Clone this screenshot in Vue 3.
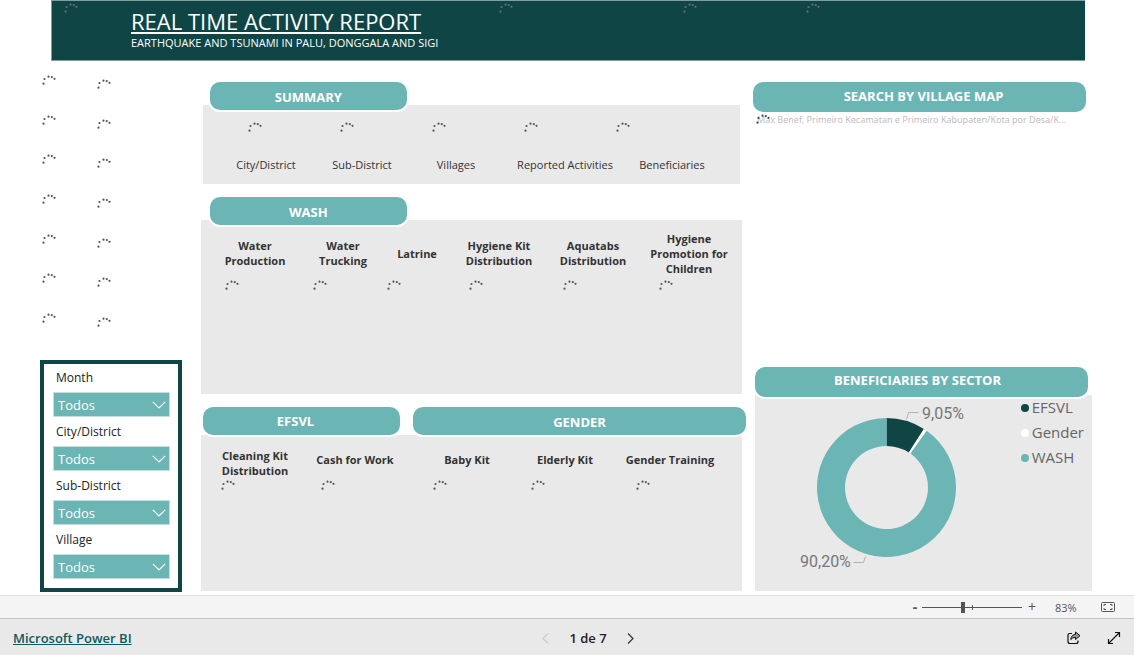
<script setup>
import { h, ref } from 'vue'

const dots = [[1.5, 8.7], [2.5, 4], [6.5, 1.7], [9.8, 2.1], [12.5, 3.8]]
const Spinner = () =>
  h('svg', { width: 14, height: 11, viewBox: '0 0 14 11', 'aria-hidden': 'true' },
    dots.map(([cx, cy]) => h('circle', { cx, cy, r: 1.1, fill: 'currentColor' })))

const summary = ['City/District', 'Sub-District', 'Villages', 'Reported Activities', 'Beneficiaries']
const wash = [
  ['Water', 'Production'],
  ['Water', 'Trucking'],
  ['Latrine'],
  ['Hygiene Kit', 'Distribution'],
  ['Aquatabs', 'Distribution'],
  ['Hygiene', 'Promotion for', 'Children'],
]
const sectors = [
  ['Cleaning Kit', 'Distribution'],
  ['Cash for Work'],
  ['Baby Kit'],
  ['Elderly Kit'],
  ['Gender Training'],
]
const filters = [
  { id: 'month', label: 'Month' },
  { id: 'city', label: 'City/District' },
  { id: 'sub', label: 'Sub-District' },
  { id: 'village', label: 'Village' },
]
const zoom = ref(41)

const slices = [
  { name: 'EFSVL', value: 9.05, color: '#0f4645' },
  { name: 'Gender', value: 0.75, color: '#ffffff' },
  { name: 'WASH', value: 90.2, color: '#6cb5b5' },
]
const cx = 131.5
const cy = 92.5
const point = (r, share) => {
  const a = share * 2 * Math.PI
  return `${(cx + r * Math.sin(a)).toFixed(2)} ${(cy - r * Math.cos(a)).toFixed(2)}`
}
let sum = 0
const arcs = slices.map((s) => {
  const from = sum / 100
  sum += s.value
  const to = sum / 100
  const big = to - from > 0.5 ? 1 : 0
  return {
    ...s,
    d: `M${point(69.5, from)}A69.5 69.5 0 ${big} 1 ${point(69.5, to)}L${point(41.5, to)}A41.5 41.5 0 ${big} 0 ${point(41.5, from)}Z`,
  }
})
</script>

<template>
  <div class="page">
    <header class="banner">
      <div class="banner-loaders"><Spinner v-for="n in 4" :key="n" /></div>
      <h1>REAL TIME ACTIVITY REPORT</h1>
      <p>EARTHQUAKE AND TSUNAMI IN PALU, DONGGALA AND SIGI</p>
    </header>

    <main class="report">
      <aside class="side">
        <div class="side-loaders">
          <div class="loader-col"><Spinner v-for="n in 7" :key="n" /></div>
          <div class="loader-col low"><Spinner v-for="n in 7" :key="n" /></div>
        </div>
        <form class="filters">
          <div v-for="f in filters" :key="f.id" class="filter">
            <label :for="f.id">{{ f.label }}</label>
            <div class="select-wrap">
              <select :id="f.id"><option>Todos</option></select>
              <svg width="14" height="8" viewBox="0 0 14 8" aria-hidden="true"><path d="M.8 .8L7 7L13.200 .8" fill="none" stroke="#fff" stroke-width="1.200" /></svg>
            </div>
          </div>
        </form>
      </aside>

      <div class="middle">
        <section>
          <h2 class="pill short">SUMMARY</h2>
          <div class="panel summary">
            <div class="summary-loaders"><Spinner v-for="n in 5" :key="n" /></div>
            <div class="summary-labels"><span v-for="s in summary" :key="s">{{ s }}</span></div>
          </div>
        </section>

        <section>
          <h2 class="pill short">WASH</h2>
          <div class="panel wash">
            <div v-for="(w, i) in wash" :key="i" class="metric">
              <h3><span v-for="l in w" :key="l">{{ l }}</span></h3>
              <Spinner />
            </div>
          </div>
        </section>

        <section>
          <div class="pill-row">
            <h2 class="pill efsvl">EFSVL</h2>
            <h2 class="pill gender">GENDER</h2>
          </div>
          <div class="panel sectors">
            <div v-for="(w, i) in sectors" :key="i" class="metric">
              <h3 :class="{ single: w.length === 1 }"><span v-for="l in w" :key="l">{{ l }}</span></h3>
              <Spinner />
            </div>
          </div>
        </section>
      </div>

      <div class="right">
        <section class="map">
          <h2 class="pill tall">SEARCH BY VILLAGE MAP</h2>
          <p class="map-title"><span class="map-loader"><Spinner /></span>Max Benef, Primeiro Kecamatan e Primeiro Kabupaten/Kota por Desa/K...</p>
        </section>
        <section class="chart">
          <h2 class="pill tall">BENEFICIARIES BY SECTOR</h2>
          <div class="panel chart-panel">
            <svg class="donut" width="230" height="180" viewBox="0 0 230 180" role="img" aria-label="Beneficiaries by sector">
              <path v-for="a in arcs" :key="a.name" :d="a.d" :fill="a.color" />
              <path d="M151.500 24.500L153.500 17.500H163.500M98.500 167.500H108.500L110.500 161.500" fill="none" stroke="#b3b3b3" />
              <text x="167" y="24">9,05%</text>
              <text x="45" y="172">90,20%</text>
            </svg>
            <ul class="legend">
              <li v-for="s in slices" :key="s.name">
                <svg width="8" height="8" viewBox="0 0 8 8" aria-hidden="true"><circle cx="4" cy="4" r="4" :fill="s.color" /></svg>{{ s.name }}
              </li>
            </ul>
          </div>
        </section>
      </div>
    </main>

    <div class="zoombar">
      <button type="button" class="step minus" aria-label="Zoom out">-</button>
      <input v-model="zoom" type="range" min="0" max="100" aria-label="Zoom">
      <button type="button" class="step plus" aria-label="Zoom in">+</button>
      <span class="percent">83%</span>
      <button type="button" class="icon" aria-label="Fit to page">
        <svg width="14" height="10" viewBox="0 0 14 10" fill="none" stroke="#555"><rect x=".5" y=".5" width="13" height="9" rx="1" /><path d="M3 4V2.500H5M9 2.500H11V4M11 6V7.500H9M5 7.500H3V6" /></svg>
      </button>
    </div>

    <footer class="footer">
      <a href="#">Microsoft Power BI</a>
      <nav class="pager">
        <button type="button" class="icon" aria-label="Previous page" disabled>
          <svg width="7" height="11" viewBox="0 0 7 11" fill="none" stroke="#b5b5b5"><path d="M6 .5L1 5.500L6 10.500" /></svg>
        </button>
        <span>1 de 7</span>
        <button type="button" class="icon" aria-label="Next page">
          <svg width="7" height="11" viewBox="0 0 7 11" fill="none" stroke="#333" stroke-width="1.200"><path d="M1 .5L6 5.500L1 10.500" /></svg>
        </button>
      </nav>
      <div class="actions">
        <button type="button" class="icon" aria-label="Share">
          <svg width="14" height="14" viewBox="0 0 14 14" fill="none" stroke="#111" stroke-linejoin="round"><path d="M5 2.500H3Q1 2.500 1 4.500V10.500Q1 12.500 3 12.500H9Q11 12.500 11 10.500V9.500" stroke-width="1.200" /><path d="M8.500 1L13 4.700L8.500 8.500V6.300Q5.500 6.200 3.800 8.600Q4.200 3.800 8.500 3.300Z" fill="#9a9a9a" /></svg>
        </button>
        <button type="button" class="icon" aria-label="Full screen">
          <svg width="14" height="14" viewBox="0 0 14 14" fill="none" stroke="#111" stroke-width="1.200"><path d="M1.500 12.500L12.500 1.500M8 1.500H12.500V6M1.500 8V12.500H6" /></svg>
        </button>
      </div>
    </footer>
  </div>
</template>

<style>
body {
  margin: 0;
}
</style>

<style scoped>
.page {
  min-height: 100vh;
  display: flex;
  flex-direction: column;
  background: #fff;
  color: #333;
  font-family: "Open Sans", "Noto Sans", sans-serif;
  font-size: 12px;
}
.page *,
.page *::before {
  box-sizing: border-box;
}
h1, h2, h3, p, ul {
  margin: 0;
  padding: 0;
}
svg {
  display: block;
  flex: none;
}
button {
  padding: 0;
  border: 0;
  background: none;
  font: inherit;
  color: inherit;
}

.banner {
  position: relative;
  margin: 0 49px 0 51px;
  min-height: 61px;
  padding: 7px 0 0 79px;
  border: 1px solid #7f9f9f;
  border-right: 0;
  background: #0f4645;
  color: #fff;
}
.banner-loaders {
  position: absolute;
  inset: 2px 0 auto 12px;
  display: grid;
  grid-template-columns: 435fr 183fr 123fr 279fr;
  color: #66706f;
}
.banner h1 {
  font-size: 22px;
  line-height: 26px;
  font-weight: 400;
  text-decoration: underline;
  text-decoration-thickness: 2px;
  text-underline-offset: 2px;
}
.banner p {
  font-size: 11px;
  line-height: 18px;
}

.report {
  flex: 1;
  display: grid;
  grid-template-columns: 161fr 552fr 339fr;
  padding: 0 42px 3px 40px;
}
.side {
  display: flex;
  flex-direction: column;
  justify-content: space-between;
  padding: 14px 19px 0 0;
  color: #555;
}
.side-loaders {
  display: flex;
  gap: 41px;
  padding-left: 2px;
}
.loader-col {
  display: flex;
  flex-direction: column;
  justify-content: space-between;
  height: 249px;
}
.low {
  margin-top: 4px;
}
.filters {
  display: flex;
  flex-direction: column;
  gap: 3px;
  padding: 2px 8px 9px 9px;
  border: 4px solid #0f4645;
  color: #222;
}
.filter label {
  display: block;
  padding-left: 3px;
  margin-bottom: 2px;
  font-size: 12px;
  line-height: 24px;
}
.select-wrap {
  display: grid;
  align-items: center;
}
.select-wrap select {
  grid-area: 1 / 1;
  width: 100%;
  height: 25px;
  padding: 0 4px;
  appearance: none;
  border: 1px solid #c5dfdf;
  border-radius: 0;
  background: #6cb5b5;
  color: #fff;
  font: 500 13px/20px "Open Sans", sans-serif;
}
.select-wrap svg {
  grid-area: 1 / 1;
  justify-self: end;
  margin-right: 4px;
  pointer-events: none;
}

.middle {
  display: flex;
  flex-direction: column;
  gap: 13px;
  padding: 21px 11px 0 0;
  min-width: 0;
}
.pill {
  position: relative;
  z-index: 1;
  display: flex;
  align-items: center;
  justify-content: center;
  height: 28px;
  border-radius: 10px;
  background: #6cb5b5;
  box-shadow: 0 0 0 2px #fff;
  color: #fff;
  font-size: 13px;
  line-height: 18px;
  font-weight: 700;
}
.short {
  width: calc(36% + 2px);
  margin: 0 0 -5px 9px;
  padding-top: 1px;
}
.tall {
  height: 30px;
}
.panel {
  background: #e9e9e9;
}
.panel :deep(svg:not(.donut)) {
  color: #555;
}
.summary {
  margin: 0 2px;
  min-height: 79px;
  padding-top: 17px;
}
.summary-loaders {
  display: grid;
  grid-template-columns: repeat(5, 1fr);
  padding: 0 32px 0 45px;
}
.summary-labels {
  display: grid;
  grid-template-columns: 96fr 96fr 92fr 126fr 88fr;
  margin-top: 24px;
  padding: 0 24px 0 15px;
  font-size: 11px;
  line-height: 16px;
  text-align: center;
  white-space: nowrap;
}
.metric {
  display: flex;
  flex-direction: column;
  align-items: center;
  min-width: 0;
}
.metric h3 {
  display: flex;
  flex-direction: column;
  justify-content: center;
  font-size: 11px;
  line-height: 15px;
  font-weight: 700;
  text-align: center;
  white-space: nowrap;
}
.metric > svg {
  margin-right: 46px;
}
.wash {
  display: grid;
  grid-template-columns: 90fr 86fr 62fr 102fr 86fr 106fr;
  min-height: 174px;
  padding: 10px 0 0 9px;
}
.wash h3 {
  height: 46px;
  margin-bottom: 4px;
}
.pill-row {
  display: grid;
  grid-template-columns: 197fr 333fr;
  gap: 13px;
  margin: 0 -4px 0 2px;
}
.efsvl {
  padding-right: 12px;
}
.gender {
  padding-top: 2px;
}
.sectors {
  display: grid;
  grid-template-columns: 98fr 102fr 122fr 74fr 136fr;
  min-height: 156px;
  padding: 13px 4px 0 5px;
}
.sectors h3 {
  justify-content: flex-start;
  height: 32px;
}
.sectors .single {
  padding-top: 4px;
}
.sectors .metric > svg {
  margin-right: 54px;
}

.right {
  display: flex;
  flex-direction: column;
  justify-content: space-between;
  padding: 21px 0 1px;
  min-width: 0;
}
.map .pill {
  margin-right: 6px;
  padding: 0 0 2px 8px;
}
.map-title {
  position: relative;
  padding-left: 4px;
  color: #c0c0c0;
  font-family: "Noto Sans", sans-serif;
  font-size: 9px;
  line-height: 16px;
  white-space: nowrap;
}
.map-loader {
  position: absolute;
  left: 3px;
  top: 2px;
  color: #444;
}
.chart {
  padding-left: 2px;
}
.chart .pill {
  margin: 0 4px -2px 0;
  padding: 0 8px 4px 0;
}
.chart-panel {
  display: flex;
  justify-content: space-between;
  min-height: 196px;
}
.donut {
  font-family: Roboto, sans-serif;
  font-size: 16px;
  fill: #777;
}
.legend {
  list-style: none;
  color: #666;
  font-size: 15px;
  line-height: 25px;
  padding-right: 8px;
}
.legend li {
  display: flex;
  align-items: center;
  gap: 3px;
}

.zoombar {
  display: flex;
  align-items: center;
  justify-content: flex-end;
  height: 23px;
  padding-right: 19px;
  border-top: 1px solid #dedede;
  background: #f4f4f4;
  color: #555;
}
.step {
  width: 10px;
  font-size: 14px;
  line-height: 16px;
}
.minus {
  font-weight: 700;
}
.zoombar input {
  width: 100px;
  height: 12px;
  margin: 0 5px 0 2px;
  appearance: none;
  background:
    linear-gradient(#555, #555) 50px 50% / 1px 5px no-repeat,
    linear-gradient(#555, #555) 0 50% / 100% 1px no-repeat;
}
.zoombar input::-webkit-slider-thumb {
  appearance: none;
  width: 4px;
  height: 11px;
  background: #555;
}
.percent {
  width: 24px;
  margin: 0 22px 0 18px;
  font-size: 11px;
}

.footer {
  display: grid;
  grid-template-columns: 1fr auto 1fr;
  align-items: center;
  height: 37px;
  padding: 2px 13px 0;
  border-top: 1px solid #c6c6c6;
  background: #e9e9e9;
}
.footer a {
  color: #0f5a5a;
  font-size: 13px;
  font-weight: 600;
  justify-self: start;
}
.pager {
  display: flex;
  align-items: center;
  gap: 20px;
  margin-right: -42px;
  color: #222;
  font-size: 13px;
  font-weight: 600;
}
.actions {
  display: flex;
  justify-content: flex-end;
  gap: 26px;
}
</style>
